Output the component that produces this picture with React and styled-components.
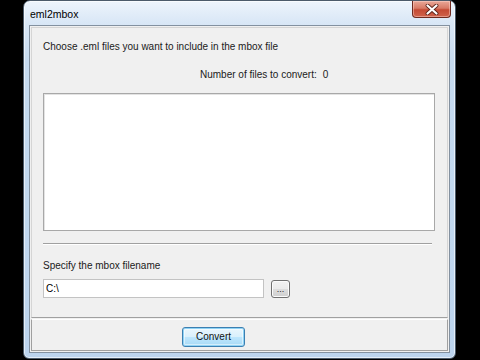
import React from 'react';
import styled, { createGlobalStyle } from 'styled-components';

const Global = createGlobalStyle`
  html, body {
    margin: 0;
    padding: 0;
    background: #000;
  }
  body {
    width: 480px;
    height: 360px;
    overflow: hidden;
    font-family: "Liberation Sans", Arial, sans-serif;
  }
`;

const App = () => {
  return (
    <>
      <Global />
      <Window>
        <TitleBar>
          <Title>eml2mbox</Title>
          <CloseButton aria-label="Close">
            <svg width="14" height="11" viewBox="0 0 14 11">
              <path d="M2.5 1.5 L11.5 9.5 M11.5 1.5 L2.5 9.5" stroke="#5a2218" strokeWidth="3.8" strokeLinecap="round" />
              <path d="M2.5 1.5 L11.5 9.5 M11.5 1.5 L2.5 9.5" stroke="#fff" strokeWidth="2.2" strokeLinecap="round" />
            </svg>
          </CloseButton>
        </TitleBar>

        <Client>
          <MainPanel>
            <Label>Choose .eml files you want to include in the mbox file</Label>
            <CountRow>
              <Label>Number of files to convert:</Label>
              <Label>0</Label>
            </CountRow>
            <FileList />
            <Separator />
            <Label $top={15}>Specify the mbox filename</Label>
            <PathRow>
              <TextBox defaultValue="C:\" />
              <SmallButton>...</SmallButton>
            </PathRow>
          </MainPanel>
          <BottomPanel>
            <ConvertButton>Convert</ConvertButton>
          </BottomPanel>
        </Client>
      </Window>
    </>
  );
};

export default App;

const Window = styled.div`
  box-sizing: border-box;
  margin-left: 23px;
  width: 433px;
  height: 359px;
  display: flex;
  flex-direction: column;
  padding: 0 5px 5px 5px;
  border: 1px solid #4b5a6a;
  border-radius: 7px 7px 6px 6px;
  background: linear-gradient(180deg, #edf4fc 0px, #d9e7f6 22px, #c6dbf0 60px, #bcd4ee 100%);
  box-shadow: inset 0 0 0 1px rgba(255, 255, 255, 0.6);
`;

const TitleBar = styled.div`
  height: 24px;
  display: flex;
  align-items: flex-start;
  padding-left: 1px;
  margin-right: -1px;
`;

const Title = styled.span`
  font-size: 10.5px;
  color: #000;
  margin-top: 7px;
`;

const CloseButton = styled.div`
  margin-left: auto;
  width: 39px;
  height: 17px;
  box-sizing: border-box;
  border: 1px solid #6e2a1f;
  border-top: none;
  border-radius: 0 0 4px 4px;
  background: linear-gradient(180deg, #e9a898 0%, #d77a66 45%, #c44a34 55%, #d0634c 100%);
  box-shadow: inset 0 0 0 1px rgba(255, 220, 210, 0.45);
  display: flex;
  align-items: center;
  justify-content: center;
`;

const Client = styled.div`
  flex: 1;
  display: flex;
  flex-direction: column;
  border: 1px solid #8391a0;
  background: #f0f0f0;
`;

const MainPanel = styled.div`
  flex: 1;
  display: flex;
  flex-direction: column;
  padding: 13px 0 0 11px;
  border: 1px solid #d5d5d5;
  border-bottom: 1px solid #a0a0a0;
  margin: 1px;
`;

const BottomPanel = styled.div`
  height: 32px;
  box-sizing: border-box;
  display: flex;
  align-items: flex-start;
  padding: 7px 0 0 150px;
  border: 1px solid #a0a0a0;
  border-top: 1px solid #fff;
  margin: 0 1px 1px 1px;
`;

const Label = styled.div`
  font-size: 10px;
  line-height: 12px;
  color: #1a1a1a;
  margin-top: ${(p) => p.$top || 0}px;
`;

const CountRow = styled.div`
  display: flex;
  gap: 6px;
  margin: 16px 0 0 157px;
`;

const FileList = styled.div`
  margin-top: 12px;
  width: 392px;
  height: 138px;
  box-sizing: border-box;
  border: 1px solid #a8a8a8;
  background: #fff;
  box-shadow: inset 1px 1px 0 #e3e3e3;
`;

const Separator = styled.div`
  margin-top: 12px;
  width: 389px;
  height: 1px;
  background: #a0a0a0;
  border-bottom: 1px solid #fff;
`;

const PathRow = styled.div`
  display: flex;
  align-items: center;
  gap: 7px;
  margin-top: 7px;
`;

const TextBox = styled.input`
  box-sizing: border-box;
  width: 221px;
  height: 19px;
  border: 1px solid #c3c3c3;
  background: #fff;
  outline: none;
  padding: 0 2px;
  font-family: "Liberation Sans", Arial, sans-serif;
  font-size: 10px;
  color: #000;
`;

const SmallButton = styled.div`
  box-sizing: border-box;
  width: 19px;
  height: 18px;
  border: 1px solid #707070;
  border-radius: 3px;
  background: linear-gradient(180deg, #f2f2f2 0%, #ebebeb 50%, #dddddd 51%, #cfcfcf 100%);
  box-shadow: inset 0 0 0 1px #fbfbfb;
  font-size: 9px;
  line-height: 16px;
  text-align: center;
  color: #222;
`;

const ConvertButton = styled.div`
  box-sizing: border-box;
  width: 63px;
  height: 20px;
  border: 1px solid #3c7fb1;
  border-radius: 3px;
  background: linear-gradient(180deg, #eaf6fd 0%, #d9f0fc 50%, #bee6fd 51%, #a7d9f5 100%);
  box-shadow: inset 0 0 0 1px #8fd3f5, inset 0 0 0 2px rgba(255, 255, 255, 0.5);
  font-size: 10px;
  line-height: 18px;
  text-align: center;
  color: #111;
`;
